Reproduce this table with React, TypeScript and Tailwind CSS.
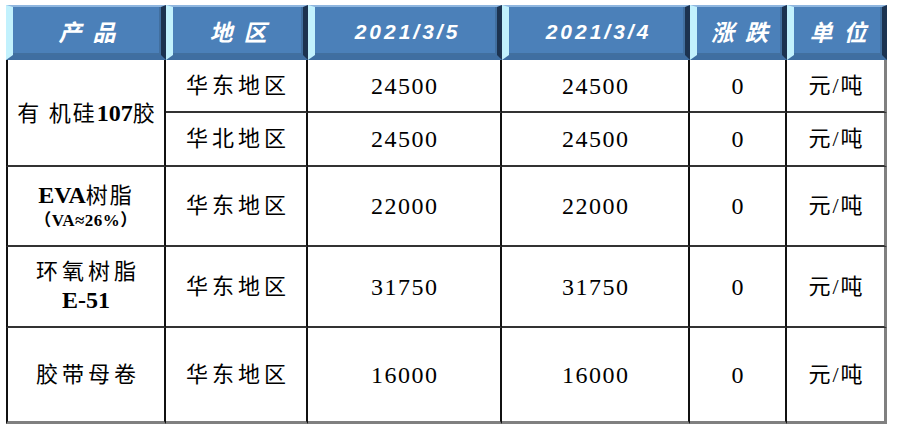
const serif = '"Liberation Serif", "Times New Roman", serif';
const cjk = '"Liberation Serif", "Noto Sans CJK SC", serif';

const headers = [
  { label: '产品', cjk: true },
  { label: '地区', cjk: true },
  { label: '2021/3/5', cjk: false },
  { label: '2021/3/4', cjk: false },
  { label: '涨跌', cjk: true },
  { label: '单位', cjk: true },
];

type Row = { region: string; a: string; b: string; last?: boolean };

function HeaderCell({ label, isCjk }: { label: string; isCjk: boolean }) {
  return (
    <div className="flex items-center justify-center border-t-2 border-t-[#8fb6df] border-l-[7px] border-l-[#c2f1fd] border-r-[5px] border-r-[#1c3350] border-b-[5px] border-b-[#3f6ea1] bg-[#4b80b9] shadow-[inset_-2px_-2px_0_#416f9f]">
      {isCjk ? (
        <span
          className="text-white text-[23px] font-bold italic tracking-[11px] pl-[11px] leading-none"
          style={{ fontFamily: '"Noto Sans CJK SC", sans-serif' }}
        >
          {label}
        </span>
      ) : (
        <span
          className="text-white text-[21px] font-bold italic tracking-[3px] pl-[3px] leading-none"
          style={{ fontFamily: '"Liberation Sans", Arial, sans-serif' }}
        >
          {label}
        </span>
      )}
    </div>
  );
}

function Cjk({ children, className = '' }: { children: React.ReactNode; className?: string }) {
  return (
    <span className={`text-[22px] text-black leading-tight ${className}`} style={{ fontFamily: cjk }}>
      {children}
    </span>
  );
}

function Num({ children }: { children: React.ReactNode }) {
  return (
    <span className="text-[24px] text-black tracking-[1.5px] pl-[1.5px]" style={{ fontFamily: serif }}>
      {children}
    </span>
  );
}

function BodyRow({ region, a, b, last }: Row) {
  const bb = last ? 'border-b-[3px] border-b-[#808080]' : 'border-b-2 border-b-[#333]';
  const cell = `flex items-center justify-center border-r-2 border-r-[#111] ${bb}`;
  return (
    <>
      <div className={cell}>
        <Cjk className="tracking-[4px] pl-[4px]">{region}</Cjk>
      </div>
      <div className={cell}>
        <Num>{a}</Num>
      </div>
      <div className={cell}>
        <Num>{b}</Num>
      </div>
      <div className={cell}>
        <Num>0</Num>
      </div>
      <div className={`flex items-center justify-center border-r-[3px] border-r-[#808080] ${bb}`}>
        <Cjk className="tracking-[2px] pl-[2px]">元/吨</Cjk>
      </div>
    </>
  );
}

export default function App() {
  const first = 'flex flex-col items-center justify-center border-l-2 border-l-[#111] border-r-2 border-r-[#111]';
  return (
    <div className="w-[898px] h-[424px] bg-white pl-[6px] pt-[5px] overflow-hidden">
      <div className="grid grid-cols-[160px_142px_194px_188px_97px_100px] grid-rows-[55px_53px_54px_80px_81px_96px]">
        {headers.map((h) => (
          <HeaderCell key={h.label} label={h.label} isCjk={h.cjk} />
        ))}

        <div className={`${first} row-span-2 border-b-2 border-b-[#333]`}>
          <span className="text-[22px] text-black tracking-[2px] whitespace-nowrap pl-[2px]" style={{ fontFamily: cjk }}>
            有 机硅<b className="font-bold text-[24px] tracking-normal" style={{ fontFamily: serif }}>107</b>胶
          </span>
        </div>
        <BodyRow region="华东地区" a="24500" b="24500" />
        <BodyRow region="华北地区" a="24500" b="24500" />

        <div className={`${first} border-b-2 border-b-[#333]`}>
          <span className="text-[22px] text-black tracking-[2px] leading-tight" style={{ fontFamily: cjk }}>
            <b className="font-bold text-[24px] tracking-normal" style={{ fontFamily: serif }}>EVA</b>树脂
          </span>
          <span className="text-[17px] font-bold text-black leading-tight tracking-[0.5px]" style={{ fontFamily: cjk }}>
            （VA≈26%）
          </span>
        </div>
        <BodyRow region="华东地区" a="22000" b="22000" />

        <div className={`${first} border-b-2 border-b-[#333]`}>
          <Cjk className="tracking-[4px] pl-[4px]">环氧树脂</Cjk>
          <span className="text-[24px] font-bold text-black leading-tight" style={{ fontFamily: serif }}>
            E-51
          </span>
        </div>
        <BodyRow region="华东地区" a="31750" b="31750" />

        <div className={`${first} border-b-[3px] border-b-[#808080]`}>
          <Cjk className="tracking-[4px] pl-[4px]">胶带母卷</Cjk>
        </div>
        <BodyRow region="华东地区" a="16000" b="16000" last />
      </div>
    </div>
  );
}
